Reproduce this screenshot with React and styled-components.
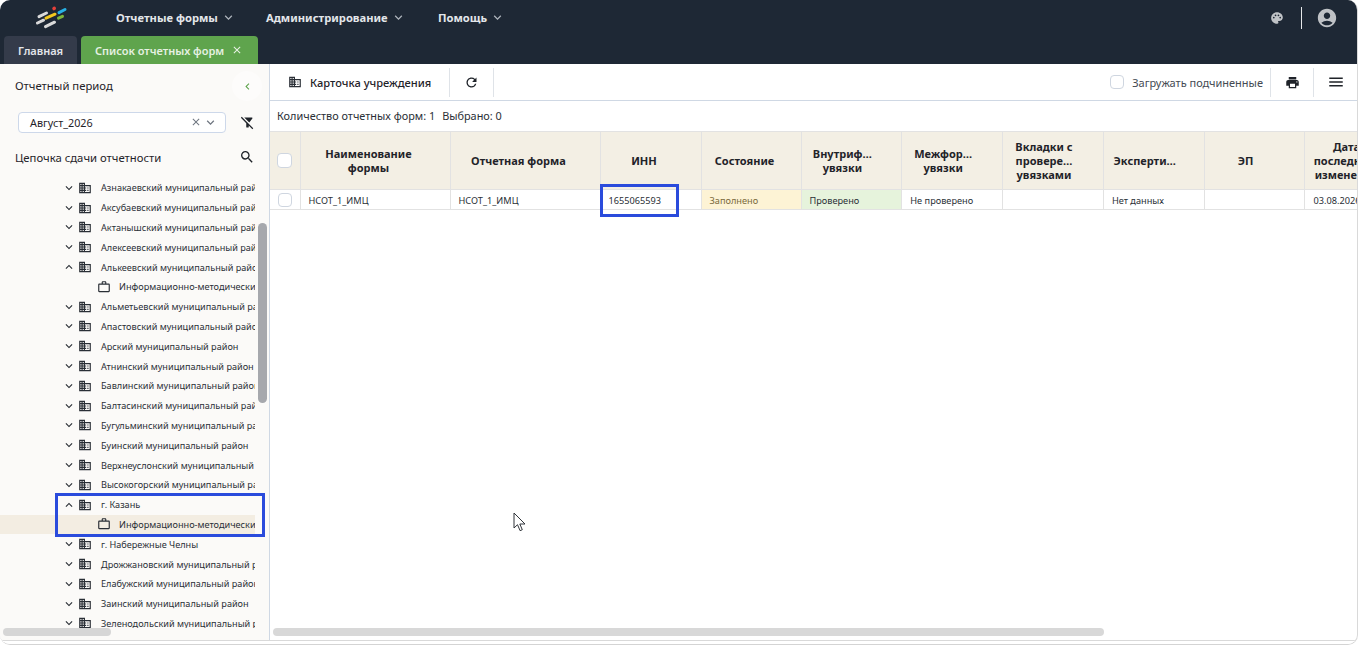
import React from "react";
import styled, { createGlobalStyle } from "styled-components";
import {
  MdDomain,
  MdExpandMore,
  MdExpandLess,
  MdOutlineWorkOutline,
  MdPalette,
  MdAccountCircle,
  MdPrint,
  MdMenu,
  MdRefresh,
  MdSearch,
  MdClose,
  MdFilterAltOff,
  MdChevronLeft,
} from "react-icons/md";

const GlobalStyle = createGlobalStyle`
  html, body {
    margin: 0;
    padding: 0;
    background: #fff;
    font-family: "Noto Sans", "Open Sans", sans-serif;
    color: #1f2329;
    overflow: hidden;
  }
  * { box-sizing: border-box; }
`;

const tree = [
  { name: "Азнакаевский муниципальный район" },
  { name: "Аксубаевский муниципальный район" },
  { name: "Актанышский муниципальный район" },
  { name: "Алексеевский муниципальный район" },
  { name: "Алькеевский муниципальный район", open: true },
  { name: "Информационно-методический центр", child: true },
  { name: "Альметьевский муниципальный район" },
  { name: "Апастовский муниципальный район" },
  { name: "Арский муниципальный район" },
  { name: "Атнинский муниципальный район" },
  { name: "Бавлинский муниципальный район" },
  { name: "Балтасинский муниципальный район" },
  { name: "Бугульминский муниципальный район" },
  { name: "Буинский муниципальный район" },
  { name: "Верхнеуслонский муниципальный район" },
  { name: "Высокогорский муниципальный район" },
  { name: "г. Казань", open: true },
  { name: "Информационно-методический центр", child: true, active: true },
  { name: "г. Набережные Челны" },
  { name: "Дрожжановский муниципальный район" },
  { name: "Елабужский муниципальный район" },
  { name: "Заинский муниципальный район" },
  { name: "Зеленодольский муниципальный район" },
];

const columns = [
  { title: "Наименование формы", width: 150 },
  { title: "Отчетная форма", width: 150 },
  { title: "ИНН", width: 101 },
  { title: "Состояние", width: 100 },
  { title: "Внутриф… увязки", width: 100.8, tight: true },
  { title: "Межфор… увязки", width: 100.8, tight: true },
  { title: "Вкладки с провере… увязками", width: 100.8, tight: true },
  { title: "Эксперти…", width: 100.8, tight: true },
  { title: "ЭП", width: 100.8, tight: true },
  { title: "Дата последнего изменения", width: 101, tight: true },
];

const row = [
  { text: "НСОТ_1_ИМЦ" },
  { text: "НСОТ_1_ИМЦ" },
  { text: "1655065593" },
  { text: "Заполнено", tone: "warn" },
  { text: "Проверено", tone: "ok" },
  { text: "Не проверено" },
  { text: "" },
  { text: "Нет данных" },
  { text: "" },
  { text: "03.08.2026" },
];

const Logo = () => (
  <svg width="32" height="24" viewBox="36 5 32 24" fill="none" strokeLinecap="round" strokeWidth="3">
    <line x1="54" y1="8.5" x2="54.2" y2="8.4" stroke="#e5403a" strokeWidth="3.6" />
    <line x1="59" y1="12.6" x2="65" y2="9.5" stroke="#27b1e6" />
    <line x1="46" y1="18.2" x2="55" y2="14.2" stroke="#f2c81e" />
    <line x1="58.5" y1="18.2" x2="62.5" y2="16.4" stroke="#7db63c" />
    <line x1="39" y1="16.6" x2="46.5" y2="13" stroke="#d9d9d9" />
    <line x1="37.5" y1="23" x2="43.5" y2="20.2" stroke="#d9d9d9" />
    <line x1="45.5" y1="26.6" x2="54.5" y2="22.2" stroke="#d9d9d9" />
  </svg>
);

const Cursor = () => (
  <CursorMark width="14" height="20" viewBox="0 0 14 20">
    <path
      d="M1 1v15l3.5-3.3 2.6 6 2.2-1-2.5-5.7H12z"
      fill="#fff"
      stroke="#30343a"
      strokeWidth="1"
      strokeLinejoin="round"
    />
  </CursorMark>
);

const App = () => {
  return (
    <Page>
      <GlobalStyle />
      <Header>
        <TopBar>
          <LogoBox>
            <Logo />
          </LogoBox>
          <Nav>
            <NavItem $w={150}>
              Отчетные формы <MdExpandMore size={15} />
            </NavItem>
            <NavItem $w={172}>
              Администрирование <MdExpandMore size={15} />
            </NavItem>
            <NavItem>
              Помощь <MdExpandMore size={15} />
            </NavItem>
          </Nav>
          <HeaderIcons>
            <MdPalette size={14} />
            <HeaderDivider />
            <MdAccountCircle size={22} />
          </HeaderIcons>
        </TopBar>
        <Tabs>
          <Tab>Главная</Tab>
          <Tab $active>
            Список отчетных форм
            <MdClose size={12} />
          </Tab>
        </Tabs>
      </Header>

      <Body>
        <Sidebar>
          <CollapseButton>
            <MdChevronLeft size={13} />
          </CollapseButton>
          <SideTitle>Отчетный период</SideTitle>
          <PeriodRow>
            <PeriodSelect>
              <span>Август_2026</span>
              <SelectIcons>
                <MdClose size={12} />
                <MdExpandMore size={15} />
              </SelectIcons>
            </PeriodSelect>
            <SideIcon>
              <MdFilterAltOff size={15} />
            </SideIcon>
          </PeriodRow>
          <ChainRow>
            <span>Цепочка сдачи отчетности</span>
            <SideIcon>
              <MdSearch size={16} />
            </SideIcon>
          </ChainRow>
          <Tree>
            {tree.map((item, i) =>
              item.child ? (
                <TreeRow key={i} $child $active={item.active}>
                  <MdOutlineWorkOutline size={14} />
                  <TreeText $child>{item.name}</TreeText>
                </TreeRow>
              ) : (
                <TreeRow key={i}>
                  {item.open ? <MdExpandLess size={14} /> : <MdExpandMore size={14} />}
                  <MdDomain size={14} />
                  <TreeText>{item.name}</TreeText>
                </TreeRow>
              )
            )}
          </Tree>
          <TreeScrollY />
          <TreeScrollX />
          <Highlight />
        </Sidebar>

        <Content>
          <Toolbar>
            <ToolButton>
              <MdDomain size={14} />
              Карточка учреждения
            </ToolButton>
            <ToolIcon>
              <MdRefresh size={15} />
            </ToolIcon>
            <ToolSpacer />
            <LoadLabel>
              <CheckBox $size={14} />
              Загружать подчиненные
            </LoadLabel>
            <ToolIcon $w={44} $left>
              <MdPrint size={15} />
            </ToolIcon>
            <ToolIcon $w={43} $left $noRight>
              <MdMenu size={18} />
            </ToolIcon>
          </Toolbar>
          <InfoRow>
            <span>Количество отчетных форм: 1</span>
            <span>Выбрано: 0</span>
          </InfoRow>
          <TableWrap>
            <Table>
              <colgroup>
                <col style={{ width: 30 }} />
                {columns.map((c) => (
                  <col key={c.title} style={{ width: c.width }} />
                ))}
              </colgroup>
              <thead>
                <tr>
                  <Th>
                    <CheckBox $size={15} />
                  </Th>
                  {columns.map((c) => (
                    <Th key={c.title} $tight={c.tight}>
                      {c.title}
                    </Th>
                  ))}
                </tr>
              </thead>
              <tbody>
                <tr>
                  <Td>
                    <CheckBox $size={14} />
                  </Td>
                  {row.map((c, i) => (
                    <Td key={i} $tone={c.tone}>
                      {c.text}
                    </Td>
                  ))}
                </tr>
              </tbody>
            </Table>
            <InnMark />
          </TableWrap>
          <TableScroll />
        </Content>
      </Body>
      <Footer />
      <Cursor />
    </Page>
  );
};

export default App;

const Page = styled.div`
  position: relative;
  width: 1358px;
  height: 645px;
  display: flex;
  flex-direction: column;
  overflow: hidden;
  background: #fff;
  border-right: 1px solid #d9d9d9;
  border-bottom: 1px solid #d4d4d4;
  border-radius: 10px;
`;

const Header = styled.header`
  height: 64px;
  flex: none;
  background: #1e2835;
`;

const TopBar = styled.div`
  height: 36px;
  display: flex;
  align-items: center;
  padding-left: 36px;
`;

const LogoBox = styled.div`
  width: 80px;
  height: 24px;
  margin-top: -2px;
`;

const Nav = styled.nav`
  display: flex;
  align-items: center;
  margin-top: -2px;
`;

const NavItem = styled.div`
  width: ${(p) => (p.$w ? `${p.$w}px` : "auto")};
  display: flex;
  align-items: center;
  gap: 3px;
  font-size: 11.2px;
  font-weight: 700;
  color: #e3e6ea;
  svg {
    color: #aeb4bc;
  }
`;

const HeaderIcons = styled.div`
  margin-left: auto;
  width: 94px;
  display: flex;
  align-items: center;
  color: #bfc2c6;
  padding-left: 7px;
`;

const HeaderDivider = styled.div`
  width: 1px;
  height: 22px;
  background: #e6e8ea;
  margin: 0 14px 0 17px;
`;

const Tabs = styled.div`
  height: 28px;
  display: flex;
  gap: 4px;
  padding-left: 4px;
`;

const Tab = styled.div`
  display: flex;
  align-items: center;
  justify-content: space-between;
  padding: 0 ${(p) => (p.$active ? "15px" : "14px")} 0 14px;
  width: ${(p) => (p.$active ? "177px" : "73px")};
  border-radius: 4px 4px 0 0;
  background: ${(p) => (p.$active ? "#5fa44d" : "#343b4a")};
  color: ${(p) => (p.$active ? "#e6f1e2" : "#e3e6ea")};
  font-size: 11px;
  font-weight: 600;
  white-space: nowrap;
  svg {
    color: #e9f2e6;
  }
`;

const Body = styled.div`
  flex: 1;
  min-height: 0;
  display: flex;
`;

const Sidebar = styled.aside`
  position: relative;
  width: 270px;
  flex: none;
  display: flex;
  flex-direction: column;
  background: #fbfaf8;
  border-right: 1px solid #cfd8e4;
`;

const CollapseButton = styled.div`
  position: absolute;
  left: 232px;
  top: 7px;
  width: 30px;
  height: 30px;
  border-radius: 50%;
  background: #fdfcfb;
  display: flex;
  align-items: center;
  justify-content: center;
  color: #5fa44d;
`;

const SideTitle = styled.div`
  height: 42px;
  padding-left: 15px;
  display: flex;
  align-items: center;
  font-size: 11.3px;
`;

const PeriodRow = styled.div`
  display: flex;
  align-items: center;
  height: 20px;
  margin-top: 6px;
  padding-left: 18px;
`;

const PeriodSelect = styled.div`
  width: 208px;
  height: 21px;
  display: flex;
  align-items: center;
  justify-content: space-between;
  padding: 0 7px 0 11px;
  background: #fff;
  border: 1px solid #cdd8ea;
  border-radius: 4px;
  font-size: 10.8px;
`;

const SelectIcons = styled.div`
  display: flex;
  align-items: center;
  gap: 1px;
  color: #6f7680;
`;

const SideIcon = styled.div`
  width: 42px;
  display: flex;
  justify-content: center;
  align-items: center;
  color: #1f2329;
`;

const ChainRow = styled.div`
  height: 20px;
  margin-top: 15px;
  padding-left: 15px;
  display: flex;
  align-items: center;
  justify-content: space-between;
  font-size: 11.3px;
  span {
    white-space: nowrap;
  }
  ${SideIcon} {
    margin-right: 1px;
  }
`;

const Tree = styled.div`
  width: 255px;
  margin-top: 11px;
  height: 450px;
  overflow: hidden;
`;

const TreeRow = styled.div`
  height: 19.8px;
  display: flex;
  align-items: center;
  gap: 2px;
  padding-left: ${(p) => (p.$child ? "97px" : "62px")};
  background: ${(p) => (p.$active ? "#f3ede2" : "transparent")};
  font-size: 9.15px;
  white-space: nowrap;
  color: #2a2f36;
  svg {
    flex: none;
    color: #2a2f36;
  }
`;

const TreeText = styled.span`
  margin-left: ${(p) => (p.$child ? "6px" : "7px")};
`;

const TreeScrollY = styled.div`
  position: absolute;
  left: 258px;
  top: 159px;
  width: 9px;
  height: 180px;
  border-radius: 5px;
  background: #a6a8ad;
`;

const TreeScrollX = styled.div`
  position: absolute;
  left: 3px;
  top: 564px;
  width: 108px;
  height: 8px;
  border-radius: 4px;
  background: #d6d6d6;
`;

const Highlight = styled.div`
  position: absolute;
  left: 55px;
  top: 429px;
  width: 210px;
  height: 44px;
  border: 3px solid #2a4bdc;
`;

const Content = styled.main`
  position: relative;
  flex: 1;
  min-width: 0;
  display: flex;
  flex-direction: column;
`;

const Toolbar = styled.div`
  height: 37px;
  flex: none;
  display: flex;
  align-items: center;
  border-bottom: 1px solid #cfd8e4;
`;

const ToolButton = styled.div`
  width: 180px;
  height: 29px;
  display: flex;
  align-items: center;
  gap: 8px;
  padding-left: 18px;
  font-size: 11.1px;
  font-weight: 500;
  border-right: 1px solid #dfe3e8;
  svg {
    color: #2a2f36;
  }
`;

const ToolIcon = styled.div`
  width: ${(p) => p.$w || 44}px;
  height: 29px;
  display: flex;
  align-items: center;
  justify-content: center;
  border-right: 1px solid #dfe3e8;
  ${(p) => p.$left && "border-left: 1px solid #dfe3e8;"}
  ${(p) => p.$noRight && "border-right: none; border-left: none;"}
`;

const ToolSpacer = styled.div`
  flex: 1;
`;

const LoadLabel = styled.label`
  display: flex;
  align-items: center;
  gap: 8px;
  margin-right: 7px;
  font-size: 11px;
  color: #444a52;
`;

const CheckBox = styled.span`
  display: inline-block;
  vertical-align: middle;
  width: ${(p) => p.$size}px;
  height: ${(p) => p.$size}px;
  background: #fff;
  border: 1px solid #cfd6e0;
  border-radius: 4px;
`;

const InfoRow = styled.div`
  height: 30px;
  flex: none;
  display: flex;
  align-items: center;
  gap: 7px;
  padding: 0 0 2px 7px;
  font-size: 10.9px;
  color: #2a2f36;
`;

const TableWrap = styled.div`
  position: relative;
  flex: 1;
  overflow: hidden;
`;

const Table = styled.table`
  width: 1136px;
  table-layout: fixed;
  border-collapse: collapse;
`;

const Th = styled.th`
  height: 58px;
  padding: ${(p) => (p.$tight ? "0 23px 0 5px" : "0 20px 0 7px")};
  background: #f3efe4;
  border: 1px solid #e2e2e2;
  border-left: none;
  font-size: 11px;
  font-weight: 700;
  line-height: 14px;
  color: #1f2329;
  text-align: center;
  &:first-child {
    padding: 0;
  }
`;

const toneBg = { warn: "#fdf3d5", ok: "#e6f3dc" };
const toneColor = { warn: "#7a6a3c", ok: "#2a2f36" };

const Td = styled.td`
  height: 20px;
  padding: 1px 7px 0 8px;
  background: ${(p) => toneBg[p.$tone] || "#fff"};
  border: 1px solid #e2e2e2;
  border-left: none;
  font-size: 9.2px;
  color: ${(p) => toneColor[p.$tone] || "#2a2f36"};
  white-space: nowrap;
  overflow: hidden;
  &:first-child {
    padding: 0;
    text-align: center;
  }
`;

const InnMark = styled.div`
  position: absolute;
  left: 330px;
  top: 53px;
  width: 79px;
  height: 33px;
  border: 3px solid #2a4bdc;
`;

const TableScroll = styled.div`
  position: absolute;
  left: 3px;
  top: 564px;
  width: 831px;
  height: 8px;
  border-radius: 4px;
  background: #d8d8d8;
`;

const Footer = styled.footer`
  height: 4px;
  flex: none;
  background: #fff;
  border-top: 1px solid #d9d9d9;
`;

const CursorMark = styled.svg`
  position: absolute;
  left: 513px;
  top: 512px;
`;
